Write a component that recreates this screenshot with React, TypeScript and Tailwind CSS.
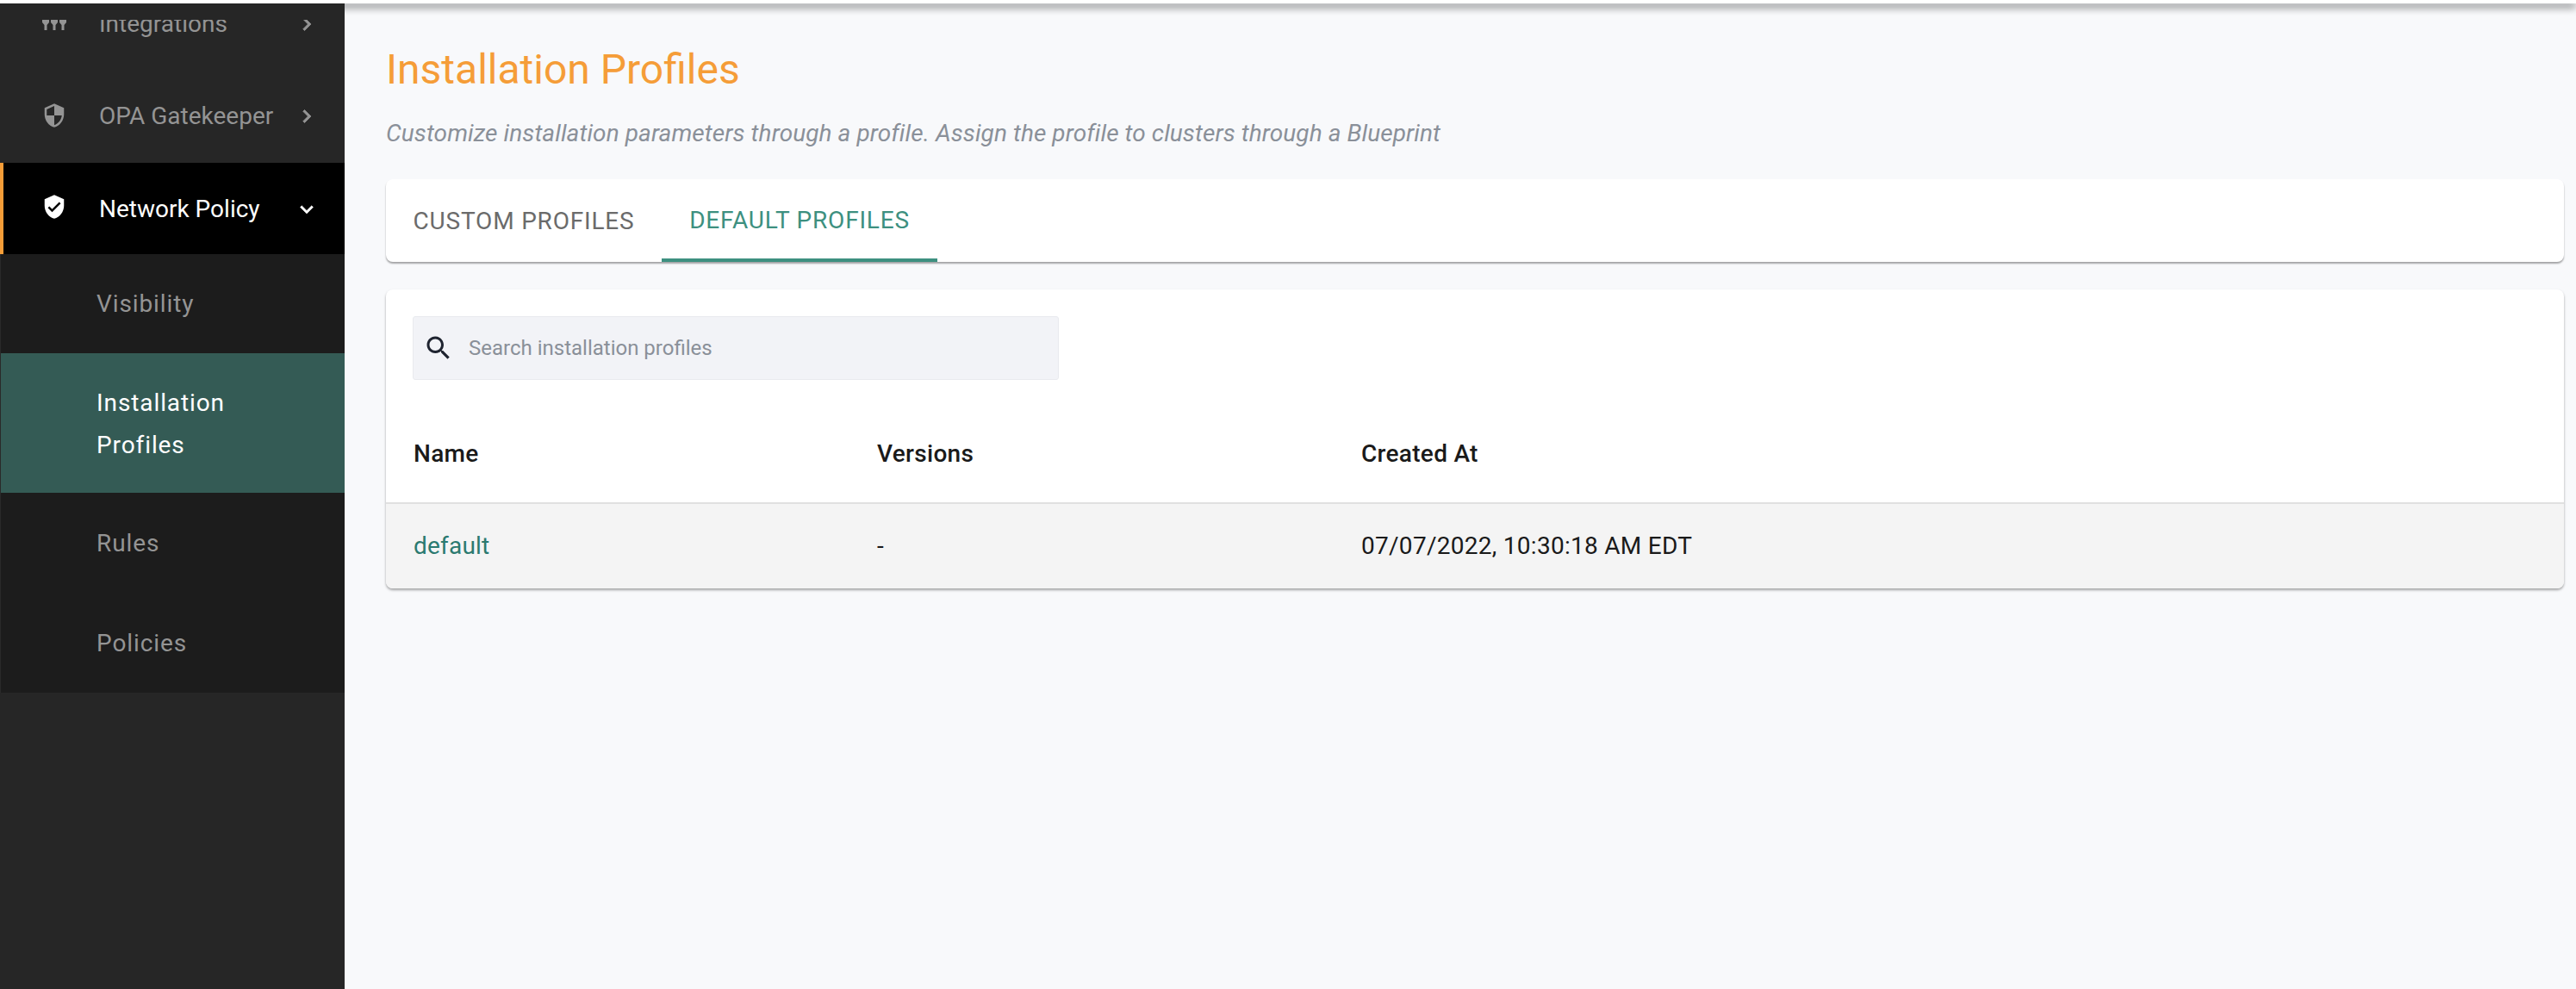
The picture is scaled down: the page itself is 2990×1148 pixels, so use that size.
import React from "react";

const ChevronRight = () => (
  <svg viewBox="0 0 24 24" className="w-[30px] h-[30px]" fill="currentColor" stroke="currentColor" strokeWidth="0.6"><path d="M10 6 8.59 7.41 13.17 12l-4.58 4.59L10 18l6-6z" /></svg>
);
const ChevronDown = () => (
  <svg viewBox="0 0 24 24" className="w-[30px] h-[30px]" fill="currentColor" stroke="currentColor" strokeWidth="0.4"><path d="M16.59 8.59 12 13.17 7.41 8.59 6 10l6 6 6-6z" /></svg>
);
const PlugsIcon = () => (
  <svg viewBox="0 0 28 16" className="w-[28px] h-[16px]" fill="currentColor">
    <rect x="0" y="0" width="8" height="1.5" /><rect x="10" y="0" width="8" height="1.5" /><rect x="20" y="0" width="8" height="1.5" />
    <path d="M0 3h8v3L5.5 9v6h-3V9L0 6zM10 3h8v3l-2.5 3v6h-3V9L10 6zM20 3h8v3l-2.5 3v6h-3V9L20 6z" />
  </svg>
);
const ShieldHalf = () => (
  <svg viewBox="0 0 24 24" className="w-[30px] h-[30px]" fill="currentColor">
    <path fillRule="evenodd" d="M12 1 3 5v6c0 5.55 3.84 10.74 9 12 5.16-1.26 9-6.45 9-12V5l-9-4zm0 10.99h7c-.53 4.12-3.28 7.79-7 8.94V12H5V6.3l7-3.11v8.8z" />
  </svg>
);
const ShieldCheck = () => (
  <svg viewBox="0 0 24 24" className="w-[30px] h-[30px]" fill="currentColor">
    <path d="M12 1 3 5v6c0 5.55 3.84 10.74 9 12 5.16-1.26 9-6.45 9-12V5l-9-4zm-2 16-4-4 1.41-1.41L10 14.17l6.59-6.59L18 9l-8 8z" />
  </svg>
);
const SearchIcon = () => (
  <svg viewBox="0 0 24 24" className="w-[36px] h-[36px]" fill="#1f2430">
    <path d="M15.5 14h-.79l-.28-.27C15.41 12.59 16 11.11 16 9.5 16 5.91 13.09 3 9.5 3S3 5.91 3 9.5 5.91 16 9.5 16c1.61 0 3.09-.59 4.23-1.57l.27.28v.79l5 4.99L20.49 19l-4.99-5zm-6 0C7.01 14 5 11.99 5 9.5S7.01 5 9.5 5 14 7.01 14 9.5 11.99 14 9.5 14z" />
  </svg>
);

export default function App() {
  return (
    <div className="h-[1148px] w-[2990px] flex flex-col overflow-hidden bg-white font-['Roboto',sans-serif]">
      <div className="h-[4px] shrink-0 bg-white relative z-10 shadow-[0_4px_10px_rgba(0,0,0,0.7)]" />
      <div className="flex flex-1 min-h-0">
        <aside className="relative z-20 w-[400px] shrink-0 bg-[#262626] pt-[19px] flex flex-col">
          <div className="flex-1 min-h-0 overflow-hidden">
            <div className="-mt-[49px]">
              <div className="h-[107px] flex items-center pl-[49px] pr-[29px] text-[#949494] text-[28px]">
                <span className="w-[66px]"><PlugsIcon /></span>
                <span className="flex-1">Integrations</span>
                <ChevronRight />
              </div>
              <div className="h-[108px] flex items-center pl-[48px] pr-[29px] text-[#949494] text-[28px]">
                <span className="w-[67px] mb-[2px]"><ShieldHalf /></span>
                <span className="flex-1">OPA Gatekeeper</span>
                <ChevronRight />
              </div>
              <div className="h-[106px] flex items-center pl-[44px] pr-[29px] bg-black border-l-[4px] border-[#f59d38] text-white text-[28px] pt-[1px]">
                <span className="w-[67px] mb-[6px]"><ShieldCheck /></span>
                <span className="flex-1">Network Policy</span>
                <ChevronDown />
              </div>
              <div className="bg-[#1c1c1c] border-l border-[#2a2a2a] text-[28px] tracking-[0.9px] text-[#949494]">
                <div className="h-[115px] flex items-center pl-[111px]">Visibility</div>
                <div className="h-[162px] flex items-center pl-[111px] bg-[#345b55] text-white leading-[49px] pt-[1px]">
                  <span className="w-[200px]">Installation Profiles</span>
                </div>
                <div className="h-[115px] flex items-center pl-[111px] pt-[3px]">Rules</div>
                <div className="h-[117px] flex items-center pl-[111px] pt-[2px]">Policies</div>
              </div>
            </div>
          </div>
        </aside>
        <main className="flex-1 min-w-0 bg-[#f8f9fb] pl-[48px] pr-[14px]">
          <h1 className="mt-[49px] h-[56px] leading-[56px] text-[48px] font-normal text-[#f59d38]">Installation Profiles</h1>
          <p className="mt-[28px] h-[36px] leading-[36px] text-[28px] tracking-[0.08px] italic text-[#8a9099]">
            Customize installation parameters through a profile. Assign the profile to clusters through a Blueprint
          </p>
          <div className="mt-[35px] h-[96px] bg-white rounded-[8px] shadow-[0_2px_2px_rgba(0,0,0,0.35)] flex overflow-hidden">
            <div className="w-[320px] flex items-center justify-center text-[28px] tracking-[0.8px] text-[#6b6b6b] pt-[1px]">CUSTOM PROFILES</div>
            <div className="w-[320px] flex items-center justify-center text-[28px] tracking-[0.8px] text-[#3d9080] border-b-[4px] border-[#3d9080] pt-[3px]">DEFAULT PROFILES</div>
          </div>
          <div className="mt-[32px] bg-white rounded-[8px] shadow-[0_2px_3px_rgba(0,0,0,0.35)] overflow-hidden">
            <div className="pt-[31px] pl-[31px]">
              <div className="w-[750px] h-[74px] bg-[#f2f3f7] border border-[#e9eaee] rounded-[3px] flex items-center pl-[11px]">
                <SearchIcon />
                <span className="ml-[17px] text-[24px] text-[#8a9099]">Search installation profiles</span>
              </div>
            </div>
            <div className="grid grid-cols-[538px_562px_1fr] pl-[32px] h-[144px] items-center text-[28px] tracking-[0.3px] font-medium text-[#1a1a1a] border-b-[2px] border-[#e0e0e0]">
              <div className="pt-[29px]">Name</div>
              <div className="pt-[29px]">Versions</div>
              <div className="pt-[29px]">Created At</div>
            </div>
            <div className="grid grid-cols-[538px_562px_1fr] pl-[32px] h-[98px] items-center text-[28px] bg-[#f4f4f4]">
              <div className="text-[#2b7a70] tracking-[0.2px]">default</div>
              <div className="text-[#1a1a1a]">-</div>
              <div className="text-[#1a1a1a] tracking-[0.28px]">07/07/2022, 10:30:18 AM EDT</div>
            </div>
          </div>
        </main>
      </div>
    </div>
  );
}
